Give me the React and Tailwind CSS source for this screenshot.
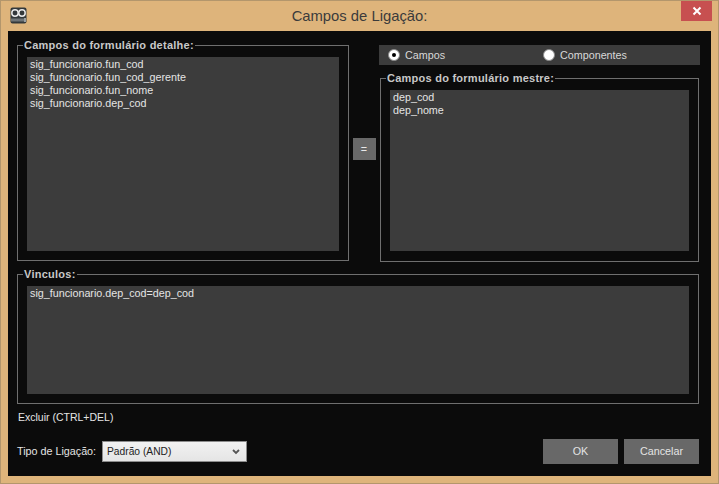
const detailFields = [
  'sig_funcionario.fun_cod',
  'sig_funcionario.fun_cod_gerente',
  'sig_funcionario.fun_nome',
  'sig_funcionario.dep_cod',
];
const masterFields = ['dep_cod', 'dep_nome'];

function Group({ title, className, children }) {
  return (
    <fieldset className={`border border-[#6f6f6f] px-[9px] pb-[9px] pt-[5px] ${className}`}>
      <legend className="ml-[-4px] h-[14px] px-[1px] text-[11px] font-bold leading-[14px] tracking-[0.25px] text-[#c8c8c8]">
        {title}
      </legend>
      {children}
    </fieldset>
  );
}

function ListBox({ items, className }) {
  return (
    <ul className={`bg-[#3c3c3c] px-[3px] py-[1px] text-[#e4e4e4] ${className}`}>
      {items.map((item) => (
        <li key={item} className="h-[13px] leading-[13px]">{item}</li>
      ))}
    </ul>
  );
}

function Radio({ label, checked, className }) {
  return (
    <label className={`flex items-center gap-[5px] ${className}`}>
      <span className="flex h-[12px] w-[12px] items-center justify-center rounded-full border border-[#8a8a8a] bg-white">
        {checked && <span className="h-[4px] w-[4px] rounded-full bg-black" />}
      </span>
      <span className="text-[#d8d8d8]">{label}</span>
    </label>
  );
}

export default function App() {
  return (
    <div className="flex h-[484px] w-[719px] flex-col overflow-hidden border border-[#b3966c] bg-[#deb47b] font-['Liberation_Sans',sans-serif] text-[10.75px]">
      {/* Title bar */}
      <div className="relative flex h-[30px] shrink-0 items-center justify-center">
        <svg className="absolute left-[9px] top-[6px]" width="17" height="17" viewBox="0 0 17 17">
          <rect x="0.5" y="0.5" width="16" height="16" rx="2" fill="#33383b" />
          <circle cx="5" cy="6" r="3.2" fill="none" stroke="#e8e8e8" strokeWidth="1.5" />
          <circle cx="12" cy="6" r="3.2" fill="none" stroke="#e8e8e8" strokeWidth="1.5" />
          <rect x="1" y="11.5" width="13" height="3" fill="#6f7477" />
          <rect x="14" y="11" width="2" height="4" fill="#9a9fa2" />
        </svg>
        <span className="text-[14.8px] text-[#3b3b3b]">Campos de Ligação:</span>
        <button className="absolute right-[6px] top-0 flex h-[20px] w-[31px] items-center justify-center bg-[#c75050] text-white">
          <svg width="10" height="10" viewBox="0 0 10 10">
            <path d="M1.5 1.5l7 7M8.5 1.5l-7 7" stroke="#fff" strokeWidth="2" />
          </svg>
        </button>
      </div>

      {/* Dialog body */}
      <div className="mx-[7px] flex h-[445px] shrink-0 flex-col bg-[#0b0b0b] px-[9px] pt-[7px]">
        <div className="flex h-[223px] shrink-0">
          <Group title="Campos do formulário detalhe:" className="h-[223px] w-[332px]">
            <ListBox items={detailFields} className="h-[194px]" />
          </Group>
          <div className="flex w-[30px] items-start justify-center pt-[100px]">
            <button className="h-[22px] w-[23px] bg-[#686868] text-[#e8e8e8]">=</button>
          </div>
          <div className="flex w-[321px] flex-col pt-[7px]">
            <div className="flex h-[20px] shrink-0 items-center bg-[#3c3c3c] pl-[9px]">
              <Radio label="Campos" checked className="w-[155px]" />
              <Radio label="Componentes" />
            </div>
            <Group title="Campos do formulário mestre:" className="ml-[1px] mr-[1px] mt-[6px] h-[191px] shrink-0">
              <ListBox items={masterFields} className="h-[161px]" />
            </Group>
          </div>
        </div>

        <Group title="Vinculos:" className="mt-[6px] h-[137px] w-[682px] shrink-0">
          <ListBox items={['sig_funcionario.dep_cod=dep_cod']} className="h-[108px]" />
        </Group>

        <div className="ml-[1px] mt-[7px] h-[13px] text-[10.5px] leading-[13px] text-[#e4e4e4]">Excluir (CTRL+DEL)</div>

        <div className="mt-[15px] flex items-center justify-between pr-[3px]">
          <div className="flex items-center">
            <span className="w-[85px] text-[#e4e4e4]">Tipo de Ligação:</span>
            <div className="flex h-[21px] w-[145px] items-center justify-between border border-[#8c8c8c] bg-gradient-to-b from-[#f2f2f2] to-[#e5e5e5] pl-[4px] pr-[6px] text-[10.25px] text-[#222]">
              <span>Padrão (AND)</span>
              <svg width="8" height="6" viewBox="0 0 8 6">
                <path d="M1 1l3 3 3-3" fill="none" stroke="#555" strokeWidth="1.8" />
              </svg>
            </div>
          </div>
          <div className="flex gap-[6px]">
            <button className="h-[25px] w-[75px] bg-[#686868] text-[#e4e4e4]">OK</button>
            <button className="h-[25px] w-[75px] bg-[#686868] text-[#e4e4e4]">Cancelar</button>
          </div>
        </div>
      </div>
    </div>
  );
}
